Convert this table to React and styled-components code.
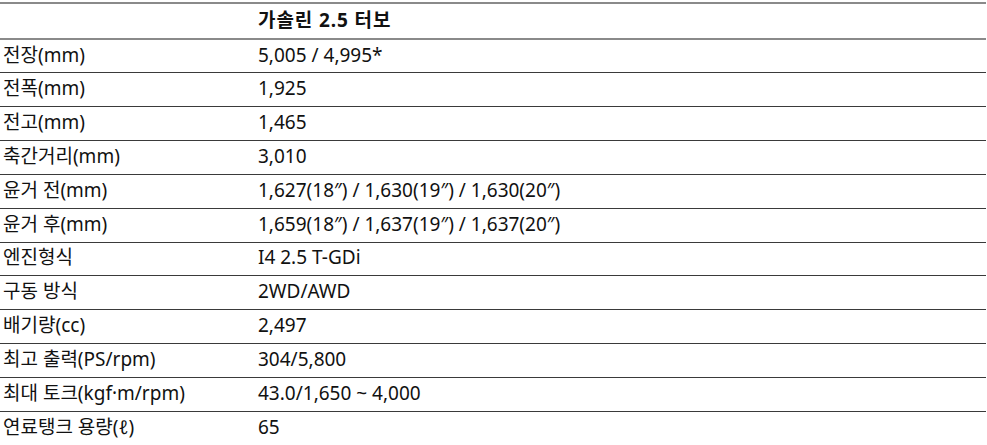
import React from "react";
import styled, { createGlobalStyle } from "styled-components";

const GlobalStyle = createGlobalStyle`
  html, body {
    margin: 0;
    padding: 0;
    background: #fff;
  }
  body {
    font-family: "Noto Sans", "Noto Sans CJK KR", sans-serif;
    color: #111;
  }
`;

const rows = [
  ["전장(mm)", "5,005 / 4,995*"],
  ["전폭(mm)", "1,925"],
  ["전고(mm)", "1,465"],
  ["축간거리(mm)", "3,010"],
  ["윤거 전(mm)", "1,627(18″) / 1,630(19″) / 1,630(20″)"],
  ["윤거 후(mm)", "1,659(18″) / 1,637(19″) / 1,637(20″)"],
  ["엔진형식", "I4 2.5 T-GDi"],
  ["구동 방식", "2WD/AWD"],
  ["배기량(cc)", "2,497"],
  ["최고 출력(PS/rpm)", "304/5,800"],
  ["최대 토크(kgf·m/rpm)", "43.0/1,650 ~ 4,000"],
  ["연료탱크 용량(ℓ)", "65"],
];

const App = () => {
  return (
    <>
      <GlobalStyle />
      <Wrapper>
        <SpecTable>
          <thead>
            <tr>
              <HeadCell />
              <HeadCell>가솔린 2.5 터보</HeadCell>
            </tr>
          </thead>
          <tbody>
            {rows.map(([label, value]) => (
              <Row key={label}>
                <Label>{label}</Label>
                <Value>{value}</Value>
              </Row>
            ))}
          </tbody>
        </SpecTable>
      </Wrapper>
    </>
  );
};

export default App;

const Wrapper = styled.div`
  width: 986px;
  padding-top: 2px;
`;

const SpecTable = styled.table`
  width: 100%;
  border-collapse: collapse;
  border-top: 2px solid #8a8a8a;
  font-size: 19px;
  line-height: 1;
`;

const HeadCell = styled.th`
  height: 32px;
  padding: 0 0 2px 0;
  text-align: left;
  font-weight: 700;
  letter-spacing: 0.9px;
  border-bottom: 2px solid #8a8a8a;
  &:first-child {
    width: 258px;
  }
`;

const Row = styled.tr`
  height: 33.85px;
  border-bottom: 1.5px solid #3a3a3a;
`;

const Label = styled.td`
  width: 255px;
  padding: 0 0 2px 3px;
  vertical-align: middle;
  white-space: nowrap;
`;

const Value = styled.td`
  padding: 0 0 2px 0;
  vertical-align: middle;
  white-space: nowrap;
`;
